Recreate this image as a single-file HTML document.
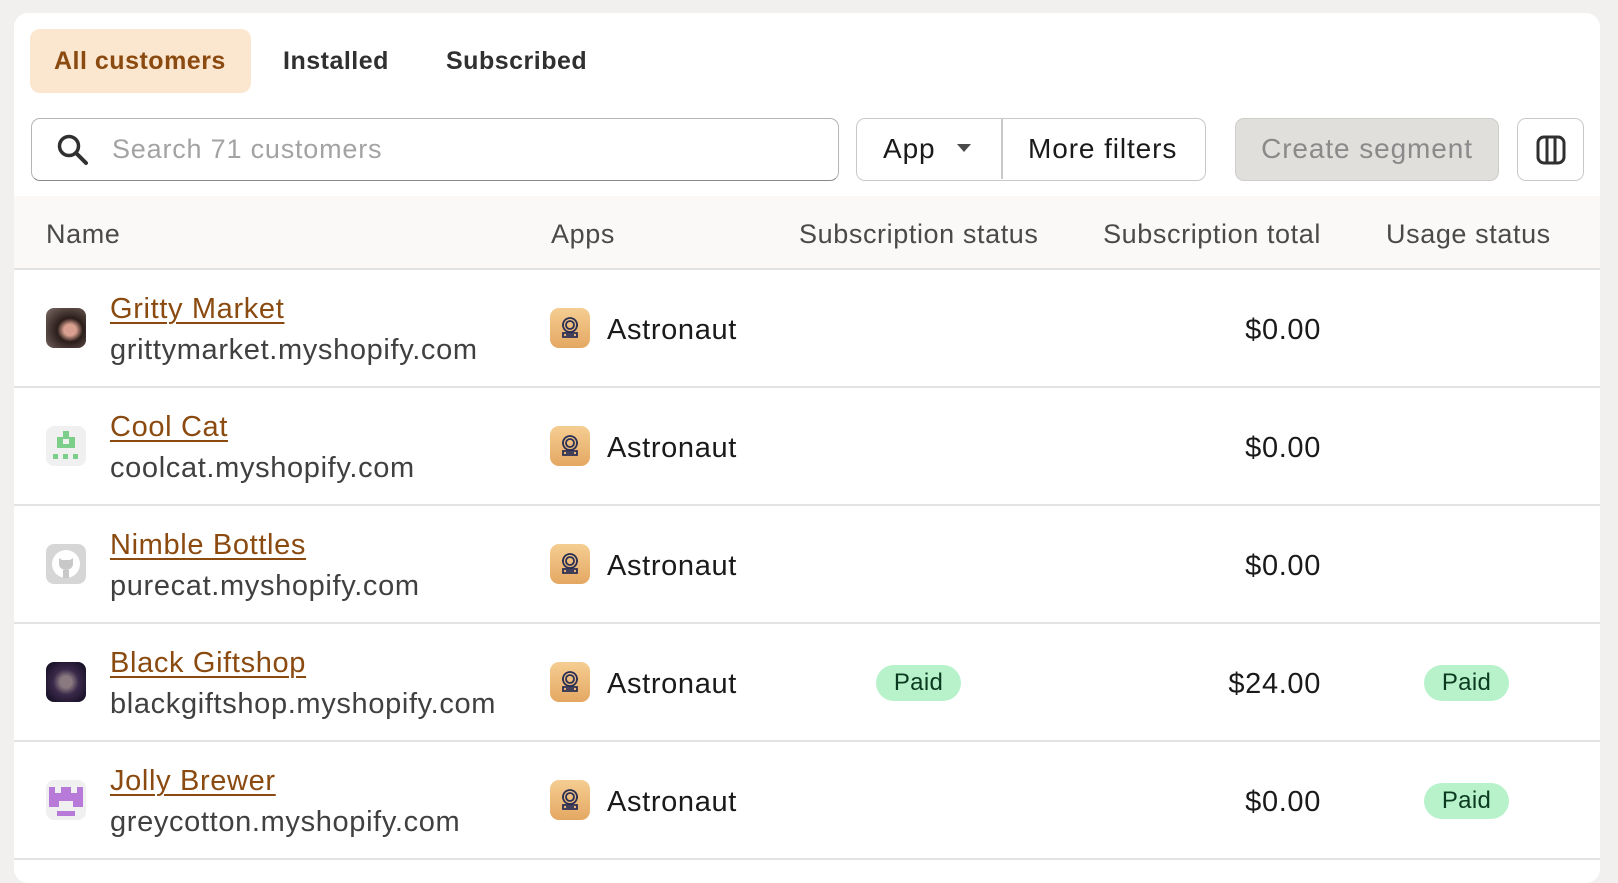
<!DOCTYPE html>
<html><head><meta charset="utf-8"><style>
*{box-sizing:border-box;margin:0;padding:0}
body{width:1618px;height:860px;background:#f1f0ee;font-family:"Liberation Sans",sans-serif;position:relative;overflow:hidden;color:#303030}
.card{position:absolute;left:14px;top:13px;width:1586px;height:870px;background:#fff;border-radius:14px;overflow:hidden}
.abs{position:absolute}
.tab{position:absolute;top:16px;height:64px;line-height:64px;font-size:25px;font-weight:bold;color:#303030;letter-spacing:0.5px}
.btn{position:absolute;top:105px;height:63px;border:1.5px solid #c9c9c9;border-radius:9px;background:#fff;font-size:28px;line-height:60px;color:#1a1a1a;letter-spacing:0.9px}
.hdr{position:absolute;left:0;top:183px;width:1586px;height:74px;background:#faf9f7;border-bottom:2px solid #e3e3e3}
.hdr span{position:absolute;top:1px;line-height:74px;font-size:27px;color:#4a4a4a;letter-spacing:0.6px}
.row{position:absolute;left:0;width:1586px;height:118px;border-bottom:2px solid #e3e3e3;font-size:29px;letter-spacing:0.65px}
.av{position:absolute;left:32px;top:38px;width:40px;height:40px;border-radius:8px;overflow:hidden}
.nm{position:absolute;left:96px;top:23px;color:#8a4a10;text-decoration:underline;text-underline-offset:4px;text-decoration-thickness:2px}
.dm{position:absolute;left:96px;top:64px;color:#404040}
.ai{position:absolute;left:536px;top:38px;width:40px;height:40px;border-radius:9px;background:linear-gradient(#f5cd92,#e4a862)}
.an{position:absolute;left:593px;top:44px;color:#1a1a1a}
.tot{position:absolute;right:279px;top:44px;color:#1a1a1a}
.paid{position:absolute;top:41px;height:36px;width:85px;border-radius:18px;background:#b7f2cb;color:#0c3a20;font-size:24px;line-height:36px;text-align:center;letter-spacing:0.3px}
</style></head><body>
<div class="card">
  <div class="abs" style="left:16px;top:16px;width:221px;height:64px;background:#fbe6d0;border-radius:10px"></div>
  <div class="tab" style="left:40px;color:#8a4a10">All customers</div>
  <div class="tab" style="left:269px">Installed</div>
  <div class="tab" style="left:432px">Subscribed</div>

  <div class="btn" style="left:17px;width:808px;border-color:#b5b5b5;border-bottom-color:#8a8a8a">
    <svg class="abs" style="left:24px;top:14px" width="34" height="34" viewBox="0 0 34 34"><circle cx="13" cy="13" r="9.5" fill="none" stroke="#303030" stroke-width="3.5"/><path d="M20 20 L30 30" stroke="#303030" stroke-width="4" stroke-linecap="round"/></svg>
    <span class="abs" style="left:80px;top:0;color:#a3a3a3;font-size:27px;letter-spacing:0.8px">Search 71 customers</span>
  </div>
  <div class="btn" style="left:842px;width:350px">
    <span class="abs" style="left:26px">App</span>
    <svg class="abs" style="left:100px;top:25px" width="14" height="10"><path d="M0 0H14L7 8Z" fill="#4a4a4a"/></svg>
    <div class="abs" style="left:144px;top:0;width:1.5px;height:60px;background:#c9c9c9"></div>
    <span class="abs" style="left:171px">More filters</span>
  </div>
  <div class="btn" style="left:1221px;width:264px;background:#e1dfdc;border-color:#cfcdca;color:#8a8a8a;text-align:center">Create segment</div>
  <div class="btn" style="left:1503px;width:67px">
    <svg class="abs" style="left:18px;top:16px" width="30" height="30" viewBox="0 0 30 30"><rect x="2" y="2" width="26" height="26" rx="6" fill="none" stroke="#303030" stroke-width="3"/><path d="M11 3V27M19 3V27" stroke="#303030" stroke-width="3"/></svg>
  </div>

  <div class="hdr">
    <span style="left:32px">Name</span>
    <span style="left:537px">Apps</span>
    <span style="left:785px">Subscription status</span>
    <span style="right:279px">Subscription total</span>
    <span style="left:1372px">Usage status</span>
  </div>

  <div class="row" style="top:257px">
    <div class="av" style="background:radial-gradient(ellipse at 60% 55%,#d9a08f 0 18%,#2a1d1a 38%,#6b5a55 85%)"></div>
    <div class="nm">Gritty Market</div><div class="dm">grittymarket.myshopify.com</div>
    <div class="ai"><svg width="40" height="40" viewBox="0 0 40 40"><g fill="none" stroke="#2a2f55" stroke-width="1.8"><circle cx="20" cy="17" r="7"/><circle cx="20" cy="17" r="4"/><path d="M13 17h-1M28 17h-1M13 29v-4h14v4zM16 27h8"/></g></svg></div>
    <div class="an">Astronaut</div><div class="tot">$0.00</div>
  </div>
  <div class="row" style="top:375px">
    <div class="av" style="background:#f0f0f0"><svg width="40" height="40"><g fill="#7ccf8a"><rect x="17" y="5" width="6" height="6"/><rect x="11" y="11" width="18" height="11"/><rect x="7" y="28" width="5" height="5"/><rect x="17" y="28" width="5" height="5"/><rect x="27" y="28" width="5" height="5"/></g><rect x="17" y="13" width="6" height="5" fill="#f0f0f0"/></svg></div>
    <div class="nm">Cool Cat</div><div class="dm">coolcat.myshopify.com</div>
    <div class="ai"><svg width="40" height="40" viewBox="0 0 40 40"><g fill="none" stroke="#2a2f55" stroke-width="1.8"><circle cx="20" cy="17" r="7"/><circle cx="20" cy="17" r="4"/><path d="M13 17h-1M28 17h-1M13 29v-4h14v4zM16 27h8"/></g></svg></div>
    <div class="an">Astronaut</div><div class="tot">$0.00</div>
  </div>
  <div class="row" style="top:493px">
    <div class="av" style="background:#d6d6d6"><svg width="40" height="40"><circle cx="20" cy="20" r="14" fill="#fff"/><path d="M13 14l3 2h8l3-2v6c0 4-4 6-7 6s-7-2-7-6z" fill="#c8c8c8"/><rect x="17" y="26" width="6" height="8" fill="#c8c8c8"/></svg></div>
    <div class="nm">Nimble Bottles</div><div class="dm">purecat.myshopify.com</div>
    <div class="ai"><svg width="40" height="40" viewBox="0 0 40 40"><g fill="none" stroke="#2a2f55" stroke-width="1.8"><circle cx="20" cy="17" r="7"/><circle cx="20" cy="17" r="4"/><path d="M13 17h-1M28 17h-1M13 29v-4h14v4zM16 27h8"/></g></svg></div>
    <div class="an">Astronaut</div><div class="tot">$0.00</div>
  </div>
  <div class="row" style="top:611px">
    <div class="av" style="background:radial-gradient(circle at 50% 50%,#8a7a80 0 20%,#3b2a4a 45%,#150f25 90%)"></div>
    <div class="nm">Black Giftshop</div><div class="dm">blackgiftshop.myshopify.com</div>
    <div class="ai"><svg width="40" height="40" viewBox="0 0 40 40"><g fill="none" stroke="#2a2f55" stroke-width="1.8"><circle cx="20" cy="17" r="7"/><circle cx="20" cy="17" r="4"/><path d="M13 17h-1M28 17h-1M13 29v-4h14v4zM16 27h8"/></g></svg></div>
    <div class="an">Astronaut</div>
    <div class="paid" style="left:862px">Paid</div>
    <div class="tot">$24.00</div>
    <div class="paid" style="left:1410px">Paid</div>
  </div>
  <div class="row" style="top:729px">
    <div class="av" style="background:#f0f0f0"><svg width="40" height="40"><g fill="#b77ad8"><rect x="3" y="7" width="6" height="6"/><rect x="15" y="7" width="10" height="6"/><rect x="31" y="7" width="6" height="6"/><rect x="3" y="13" width="34" height="8"/><rect x="3" y="21" width="10" height="6"/><rect x="27" y="21" width="10" height="6"/><rect x="11" y="31" width="18" height="5"/></g></svg></div>
    <div class="nm">Jolly Brewer</div><div class="dm">greycotton.myshopify.com</div>
    <div class="ai"><svg width="40" height="40" viewBox="0 0 40 40"><g fill="none" stroke="#2a2f55" stroke-width="1.8"><circle cx="20" cy="17" r="7"/><circle cx="20" cy="17" r="4"/><path d="M13 17h-1M28 17h-1M13 29v-4h14v4zM16 27h8"/></g></svg></div>
    <div class="an">Astronaut</div><div class="tot">$0.00</div>
    <div class="paid" style="left:1410px">Paid</div>
  </div>
</div>
</body></html>
